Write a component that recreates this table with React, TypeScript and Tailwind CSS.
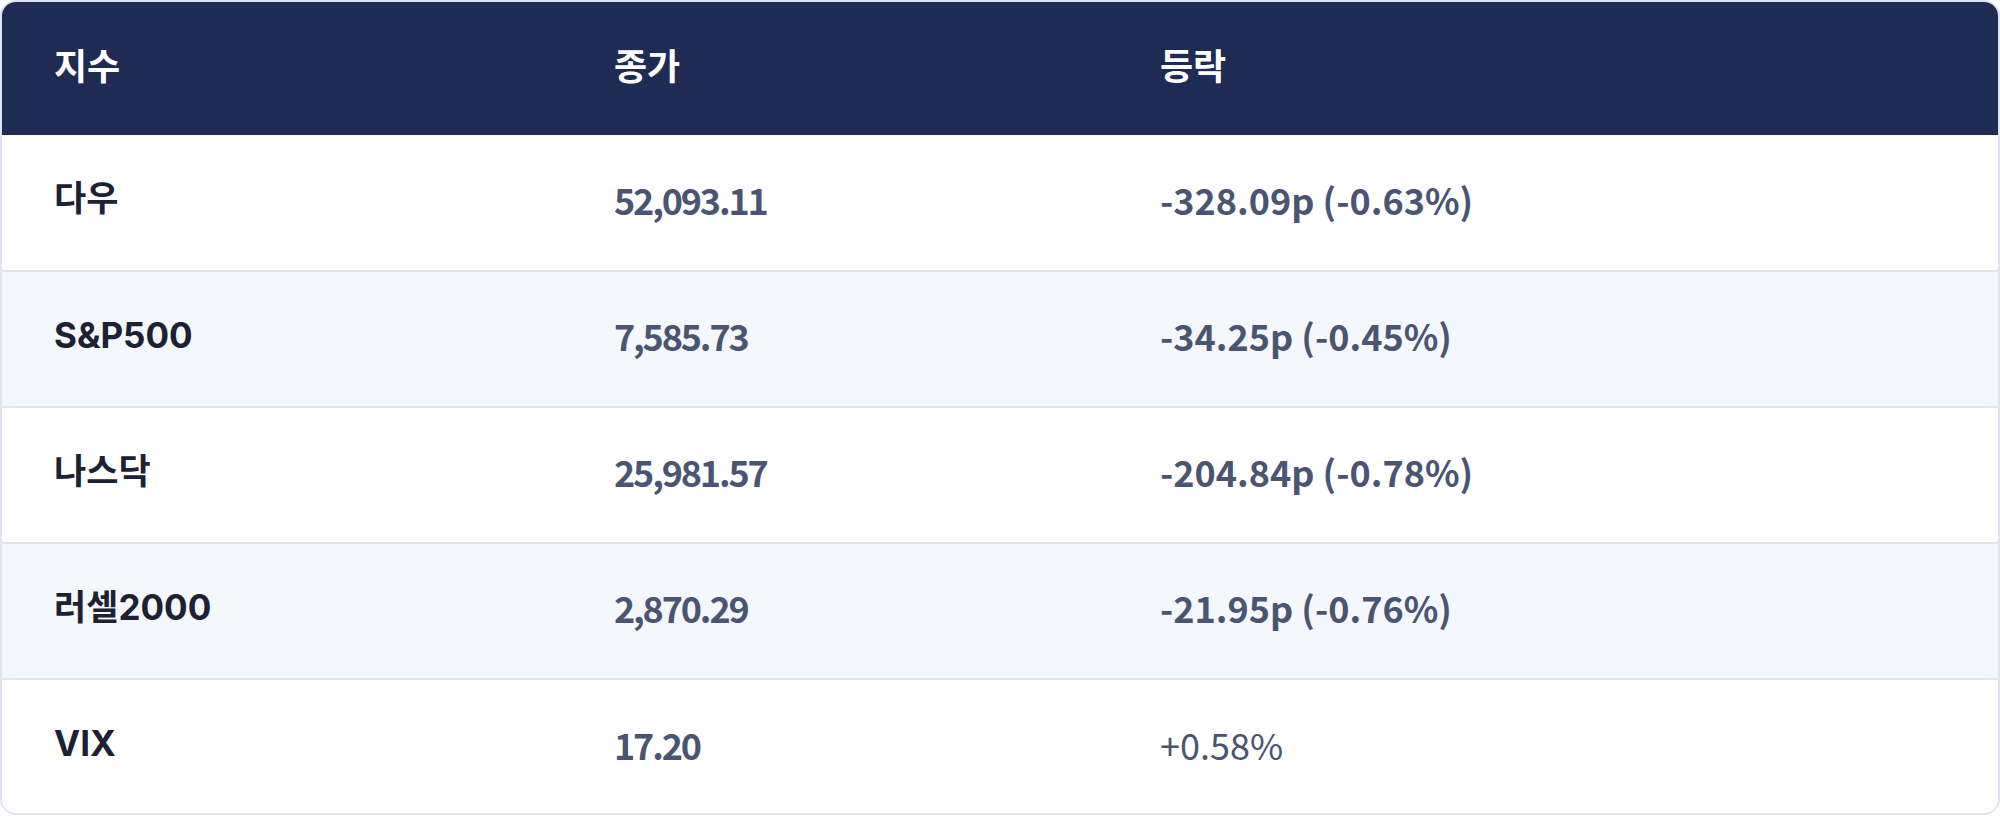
const rows = [
  { name: '다우', close: '52,093.11', change: '-328.09p (-0.63%)', strong: true },
  { name: 'S&P500', close: '7,585.73', change: '-34.25p (-0.45%)', strong: true },
  { name: '나스닥', close: '25,981.57', change: '-204.84p (-0.78%)', strong: true },
  { name: '러셀2000', close: '2,870.29', change: '-21.95p (-0.76%)', strong: true },
  { name: 'VIX', close: '17.20', change: '+0.58%', strong: false },
]

export default function App() {
  return (
    <div
      className="w-[2000px] h-[816px] bg-white"
      style={{ fontFamily: '"Noto Sans CJK KR", "Noto Sans", sans-serif' }}
    >
      <div className="h-[815px] overflow-hidden rounded-[16px] border-2 border-[#dfe5f0]">
        <table className="w-full border-collapse table-fixed">
          <colgroup>
            <col className="w-[610px]" />
            <col className="w-[546px]" />
            <col />
          </colgroup>
          <thead>
            <tr className="h-[133px] bg-[#1e2b53] text-white">
              <th className="pl-[52px] pb-[10px] text-left text-[36px] font-bold">지수</th>
              <th className="pl-[2px] pb-[10px] text-left text-[36px] font-bold">종가</th>
              <th className="pl-[2px] pb-[10px] text-left text-[36px] font-bold">등락</th>
            </tr>
          </thead>
          <tbody>
            {rows.map((r, i) => (
              <tr
                key={r.name}
                className={`h-[136px] ${i > 0 ? 'border-t-2 border-[#dfe5f0]' : ''} ${i % 2 === 1 ? 'bg-[#f4f7fc]' : 'bg-white'}`}
              >
                <td className="pl-[52px] pb-[8px] font-['Inter','Noto_Sans_CJK_KR',sans-serif] text-[35px] font-bold text-[#1c2233]">
                  {r.name}
                </td>
                <td className="pl-[2px] pb-[8px] text-[36px] font-semibold tracking-[-0.06em] text-[#4a5573]">
                  {r.close}
                </td>
                <td
                  className={`pl-[2px] pb-[8px] text-[36px] text-[#4a5573] ${r.strong ? 'font-semibold' : 'font-normal'}`}
                >
                  {r.change}
                </td>
              </tr>
            ))}
          </tbody>
        </table>
      </div>
    </div>
  )
}
